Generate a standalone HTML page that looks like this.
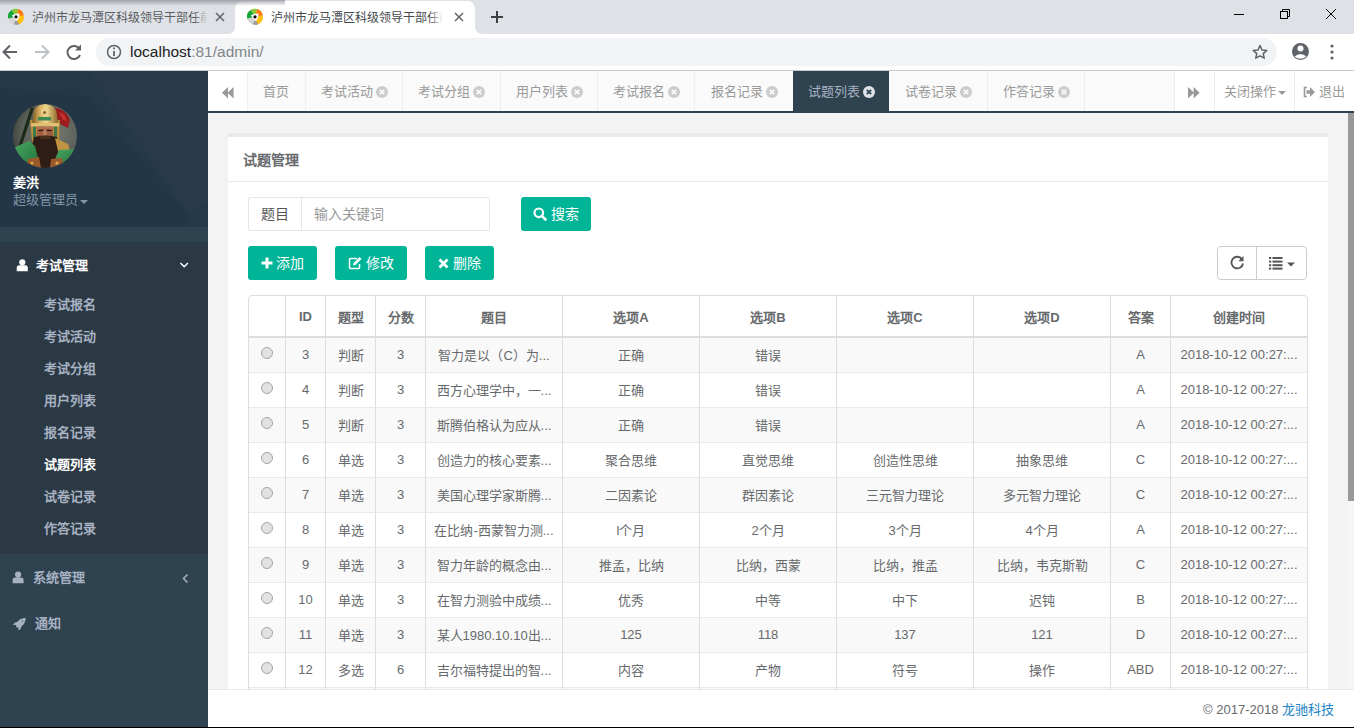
<!DOCTYPE html>
<html lang="zh-CN">
<head>
<meta charset="utf-8">
<style>
*{box-sizing:border-box;margin:0;padding:0}
html,body{width:1366px;height:728px;overflow:hidden;background:#fff;font-family:"Liberation Sans",sans-serif}
.abs{position:absolute}
#win{position:absolute;left:0;top:0;width:1354px;height:728px;overflow:hidden;background:#fff}
/* chrome */
#tabstrip{position:absolute;left:0;top:0;width:1354px;height:34px;background:#dee1e6}
.ctab{position:absolute;top:0;height:34px;font-size:12px;color:#45484c;white-space:nowrap}
.ctab .tt{position:absolute;left:32px;top:11px;width:176px;overflow:hidden;line-height:14px}
.ctab .tt:after{content:"";position:absolute;right:0;top:0;width:14px;height:14px}
#tab1 .tt:after{background:linear-gradient(to right,rgba(222,225,230,0),#dee1e6)}
#tab2{left:235px;width:240px;background:#fff;border-radius:8px 8px 0 0;top:1px;height:33px}
#tab2 .tt{top:10px;left:36px;width:172px}
#tab2 .tt:after{background:linear-gradient(to right,rgba(255,255,255,0),#fff)}
#toolbar{position:absolute;left:0;top:34px;width:1354px;height:36px;background:#fff}
#sep{position:absolute;left:0;top:70px;width:1354px;height:1px;background:#c8cacd}
#omni{position:absolute;left:96px;top:38px;width:1181px;height:28px;border-radius:14px;background:#f1f3f4}
#url{position:absolute;left:130px;top:43px;font-size:15.5px;line-height:18px;color:#202124;letter-spacing:0}
#url span{color:#80868b}
/* page */
#side{position:absolute;left:0;top:71px;width:208px;height:657px;background:#2e4250}
#navh{position:absolute;left:0;top:0;width:208px;height:156px;background:#243847;overflow:hidden}
.menu2{position:absolute;left:44px;font-size:13px;line-height:18px;color:#a7b1c2;font-weight:bold;white-space:nowrap}
#main{position:absolute;left:208px;top:71px;width:1146px;height:657px;background:#f3f3f4}
#tabsbar{position:absolute;left:0;top:0;width:1146px;height:42px;background:#fafafa;border-bottom:2px solid #2f4050}
.ptab{position:absolute;top:0;height:40px;line-height:42px;font-size:13px;color:#999;border-right:1px solid #eee;padding:0 15px;white-space:nowrap}
.cxs{display:inline-block;vertical-align:middle;margin-left:3px;position:relative;top:-1px}
.cx{display:inline-block;width:12px;height:12px;border-radius:50%;background:#ccc;vertical-align:middle;margin-left:3px;position:relative;top:-1px}
#footer{position:absolute;left:0;top:618px;width:1146px;height:38px;background:#fff;border-top:1px solid #e7eaec}
#bline{position:absolute;left:0;top:727px;width:1354px;height:1px;background:#000}
#frame{position:absolute;left:0;top:42px;width:1146px;height:576px;overflow:hidden;background:#f3f3f4}
#sb{position:absolute;left:1140px;top:0;width:6px;height:576px;background:#f6f6f6}
#sbt{position:absolute;left:0;top:0;width:6px;height:388px;background:#999}
.ibox{position:absolute;left:20px;top:20px;width:1100px;height:700px;background:#fff}
.ititle{position:absolute;left:0;top:0;width:1100px;height:49px;border-top:4px solid #e7eaec;border-bottom:1px solid #e7eaec}
.btn{position:absolute;height:34px;background:#00b498;border-radius:3px;color:#fff;font-size:14px;line-height:34px;white-space:nowrap}
table{position:absolute;border-collapse:separate;border-spacing:0;font-size:13px;color:#676a6c}
th{height:42px;font-weight:bold;text-align:center;border-bottom:2px solid #ddd;padding:0;white-space:nowrap;overflow:hidden}
td{height:35px;text-align:center;border-bottom:1px solid #e7eaec;padding:0 0 2px 0;white-space:nowrap;overflow:hidden}
.radio{position:absolute;left:12px;top:9px;width:12px;height:12px;border-radius:50%;background:#e2e2e2;border:1px solid #a5a5a5}
</style>
</head>
<body>
<div id="win">
  <div id="tabstrip">
    <div class="ctab" id="tab1" style="left:0;width:235px;color:#595c61">
      <div class="tt">泸州市龙马潭区科级领导干部任前公示</div>
    </div>
    <div class="ctab" id="tab2">
      <div class="tt">泸州市龙马潭区科级领导干部任前公示</div>
    </div>
  </div>
  <div id="toolbar"></div>
  <div id="omni"></div>
  <div id="url">localhost<span>:81/admin/</span></div>
  <div id="sep"></div>

  <svg class="abs" style="left:0;top:0" width="1354" height="71" viewBox="0 0 1354 71">
    <defs>
      <linearGradient id="shd" x1="0" y1="0" x2="0" y2="1">
        <stop offset="0" stop-color="#8f939a" stop-opacity="0.8"/>
        <stop offset="1" stop-color="#8f939a" stop-opacity="0"/>
      </linearGradient>
      <g id="fav"><circle cx="0" cy="0" r="8" fill="#d4d4d4"/><path d="M0 0 L1.11 7.92 A8 8 0 0 0 7.83 -1.66 Z" fill="#ffc20e"/><path d="M0 0 L7.83 -1.66 A8 8 0 0 0 1.94 -7.76 Z" fill="#ff7a0a"/><path d="M0 0 L1.94 -7.76 A8 8 0 0 0 -4.36 -6.71 Z" fill="#8cc932"/><path d="M0 0 L-4.36 -6.71 A8 8 0 0 0 -7.83 1.66 Z" fill="#13a538"/><path d="M-2 7.75 A8 8 0 0 0 3.2 7.33 L1.2 4 L-1 4.5 Z" fill="#9b9b9b"/><path d="M-4.3 -1.2 Q-0.5 -3.8 3.4 -3.2 Q3.8 1.2 0.9 4.2 Q-1.8 1.4 -4.3 -1.2 Z" fill="#fff"/><circle cx="0" cy="0" r="1.6" fill="#000"/></g>
    </defs>
    <path d="M227 34 Q235 34 235 26 L235 34 Z M475 26 Q475 34 483 34 L475 34 Z" fill="#fff"/>
    <rect x="0" y="0" width="285" height="6" fill="url(#shd)"/>
    <use href="#fav" x="16" y="16.8"/>
    <use href="#fav" x="255" y="16.8"/>
    <g stroke="#5f6368" stroke-width="1.5" fill="none">
      <path d="M216 13 L224 21 M224 13 L216 21"/>
      <path d="M455 13 L463 21 M463 13 L455 21"/>
    </g>
    <path d="M491 17 H503 M497 11 V23" stroke="#3c4043" stroke-width="2" fill="none"/>
    <g stroke="#000" stroke-width="1" fill="none">
      <path d="M1234 14.5 H1244"/>
      <rect x="1280.5" y="11.5" width="7" height="7"/>
      <path d="M1282.5 11.5 V9.5 H1289.5 V16.5 H1287.5"/>
      <path d="M1326 9 L1336 19 M1336 9 L1326 19"/>
    </g>
    <g stroke="#5f6368" stroke-width="2" fill="none">
      <path d="M17 52 H4 M10 45.5 L3.5 52 L10 58.5"/>
    </g>
    <g stroke="#bdc1c6" stroke-width="2" fill="none">
      <path d="M35 52 H48 M42 45.5 L48.5 52 L42 58.5"/>
    </g>
    <g stroke="#5f6368" stroke-width="2" fill="none">
      <path d="M79.5 49 A6.5 6.5 0 1 0 80 55"/>
    </g>
    <path d="M81 44.5 V50.5 H75 Z" fill="#5f6368"/>
    <circle cx="114" cy="52" r="6.5" stroke="#5f6368" stroke-width="1.5" fill="none"/>
    <rect x="113.1" y="51" width="1.8" height="5" fill="#5f6368"/>
    <rect x="113.1" y="47.5" width="1.8" height="1.8" fill="#5f6368"/>
    <path d="M1260 45.5 L1262 50 L1266.8 50.4 L1263.2 53.6 L1264.3 58.2 L1260 55.8 L1255.7 58.2 L1256.8 53.6 L1253.2 50.4 L1258 50 Z" stroke="#5f6368" stroke-width="1.5" fill="none" stroke-linejoin="round"/>
    <circle cx="1300.5" cy="51.5" r="8.5" fill="#5f6368"/>
    <circle cx="1300.5" cy="48.5" r="3" fill="#fff"/>
    <path d="M1294.5 56.5 Q1300.5 51.5 1306.5 56.5 Q1300.5 61 1294.5 56.5 Z" fill="#fff"/>
    <g fill="#5f6368">
      <circle cx="1332" cy="46" r="1.6"/><circle cx="1332" cy="52" r="1.6"/><circle cx="1332" cy="58" r="1.6"/>
    </g>
  </svg>

  <div id="side">
    <div id="navh">
      <svg class="abs" style="left:0;top:0" width="208" height="156">
        <path d="M88 0 L208 0 L208 130 L190 145 Z" fill="#293b4b" opacity="0.75"/>
        <path d="M0 18 Q40 20 88 26 L190 145 L180 156 L0 156 Z" fill="#223344" opacity="0.5"/>
      </svg>
      <svg class="abs" style="left:13px;top:33px" width="64" height="64" viewBox="0 0 64 64">
        <defs><clipPath id="cc"><circle cx="32" cy="32" r="32"/></clipPath>
        <filter id="bl" filterUnits="userSpaceOnUse" x="-5" y="-5" width="74" height="74"><feGaussianBlur stdDeviation="0.6"/></filter>
        <radialGradient id="bgav" cx="0.6" cy="0.45" r="0.65"><stop offset="0" stop-color="#777a72"/><stop offset="0.7" stop-color="#5a5f57"/><stop offset="1" stop-color="#3c433c"/></radialGradient>
        <linearGradient id="gold" x1="0" y1="0" x2="1" y2="0"><stop offset="0" stop-color="#7a5a22"/><stop offset="0.3" stop-color="#d8b060"/><stop offset="0.55" stop-color="#f0d890"/><stop offset="1" stop-color="#8a6428"/></linearGradient>
        <linearGradient id="skin" x1="0" y1="0" x2="0" y2="1"><stop offset="0" stop-color="#b67452"/><stop offset="1" stop-color="#8c4e34"/></linearGradient>
        <linearGradient id="grn" x1="0" y1="0" x2="1" y2="1"><stop offset="0" stop-color="#4caa62"/><stop offset="1" stop-color="#1e6e3a"/></linearGradient>
        </defs>
        <g clip-path="url(#cc)">
          <rect width="64" height="64" fill="url(#bgav)"/>
          <g filter="url(#bl)">
          <path d="M18 3 L21 4 L8 44 L5 43 Z" fill="#1e2a1c"/>
          <path d="M41 4 Q52 4 57 16 L55 24 L47 20 L43 12 Z" fill="#9a1c1c"/>
          <path d="M46 8 Q52 10 54 17 L50 16 Z" fill="#c83030"/>
          <path d="M17 16 L24 16 L25 36 L19 38 Z" fill="#b88a3a"/>
          <path d="M40 16 L47 16 L46 38 L40 36 Z" fill="#b88a3a"/>
          <path d="M20 20 L23 20 L23 34 L20 35 Z" fill="#3e7a46"/>
          <path d="M41 20 L44 20 L44 35 L41 34 Z" fill="#3e7a46"/>
          <path d="M20 10 Q21 1 32 0 Q43 1 44 10 L45 21 L19 21 Z" fill="url(#gold)"/>
          <circle cx="31.5" cy="8" r="3.6" fill="#e6d08a"/>
          <circle cx="31.5" cy="8.5" r="1.6" fill="#8a6a30"/>
          <path d="M25 13 L38 13 L38 16.5 L25 16.5 Z" fill="#3e8a52"/>
          <path d="M18 19 L46 19 L46 22.5 L18 22.5 Z" fill="#e0c070"/>
          <path d="M23.5 22.5 L40.5 22.5 L40 36 L24 36 Z" fill="url(#skin)"/>
          <path d="M25 26 L30 25.5 L30 27 L25.5 27.2 Z M34 25.5 L39 26 L38.5 27.2 L34 27 Z" fill="#2a160c"/>
          <path d="M30.5 27 L33 27 L33.5 32 L30 32 Z" fill="#c08060"/>
          <path d="M21 33 Q32 30 44 33 L46 46 L39 64 L26 64 L18 46 Z" fill="#2e1d13"/>
          <path d="M26 32.5 Q32 31 38 32.5 L37 35 L27 35 Z" fill="#4a2e1e"/>
          <path d="M0 44 L16 37 L22 42 L26 58 L20 64 L0 64 Z" fill="url(#grn)"/>
          <path d="M42 34 L55 40 L58 50 L45 47 Z" fill="#c09440"/>
          <path d="M64 45 L46 46 L41 58 L46 64 L64 64 Z" fill="url(#grn)"/>
          <path d="M15 55 L26 53 L28 64 L13 64 Z" fill="#9a5a2c"/>
          <path d="M38 55 L49 54 L51 64 L37 64 Z" fill="#9a5a2c"/>
          <circle cx="19" cy="59" r="1.6" fill="#d8a850"/>
          <circle cx="44" cy="59" r="1.6" fill="#d8a850"/>
          </g>
        </g>
      </svg>
      <div class="abs" style="left:13px;top:103px;font-size:13px;line-height:18px;color:#fff;font-weight:bold">姜洪</div>
      <div class="abs" style="left:13px;top:120px;font-size:13px;line-height:18px;color:#8095a8">超级管理员<span style="display:inline-block;width:0;height:0;border-left:4px solid transparent;border-right:4px solid transparent;border-top:4px solid #8095a8;margin-left:2px;vertical-align:middle;position:relative;top:1px"></span></div>
    </div>
    <div class="abs" style="left:0;top:171px;width:208px;height:312px;background:#2a3944"></div>
    <svg class="abs" style="left:0;top:171px" width="208" height="420">
      <g fill="#fff">
        <circle cx="22.3" cy="20.3" r="3.1"/>
        <path d="M16.7 29.2 V25.8 Q16.7 23.2 19.2 23.2 H25.3 Q27.8 23.2 27.8 25.8 V29.2 Z"/>
      </g>
      <path d="M180.5 21 L184.2 24.7 L187.9 21" stroke="#fff" stroke-width="1.6" fill="none"/>
    </svg>
    <div class="abs" style="left:36px;top:186px;font-size:13px;line-height:18px;color:#fff;font-weight:bold">考试管理</div>
    <div class="menu2" style="top:225px">考试报名</div>
    <div class="menu2" style="top:257px">考试活动</div>
    <div class="menu2" style="top:289px">考试分组</div>
    <div class="menu2" style="top:321px">用户列表</div>
    <div class="menu2" style="top:353px">报名记录</div>
    <div class="menu2" style="top:385px;color:#fff">试题列表</div>
    <div class="menu2" style="top:417px">试卷记录</div>
    <div class="menu2" style="top:449px">作答记录</div>
    <svg class="abs" style="left:0;top:483px" width="208" height="174">
      <g fill="#a7b1c2">
        <circle cx="18.1" cy="20.6" r="3.1"/>
        <path d="M12.6 29.2 V25.8 Q12.6 23.4 15 23.4 H21.2 Q23.6 23.4 23.6 25.8 V29.2 Z"/>
        <g transform="translate(13 63.5)"><path d="M12.8 0.2 Q7 0.6 4.2 4.4 L1.6 5.2 L0 7.6 L3.2 7.6 L3 9.2 L3.8 10 L5.4 9.8 L5.4 13 L7.6 11.4 L8.6 8.8 Q12.4 6 12.8 0.2 Z"/><circle cx="9.4" cy="3.6" r="0.6" fill="#2e4250"/></g>
      </g>
      <path d="M187.5 20.5 L183.5 24.5 L187.5 28.5" stroke="#a7b1c2" stroke-width="1.5" fill="none"/>
    </svg>
    <div class="abs" style="left:33px;top:498px;font-size:13px;line-height:18px;color:#a7b1c2;font-weight:bold">系统管理</div>
    <div class="abs" style="left:35px;top:544px;font-size:13px;line-height:18px;color:#a7b1c2;font-weight:bold">通知</div>
  </div>

  <div id="main">
    <div id="tabsbar">
<div class="abs" style="left:0;top:0;width:40px;height:40px;background:#fff;border-right:1px solid #eee"></div>
<svg class="abs" style="left:14px;top:16px" width="12" height="12" viewBox="0 0 12 12"><path d="M6 0 L0 5.7 L6 11.4 Z M11.6 0 L5.6 5.7 L11.6 11.4 Z" fill="#999"/></svg>
<div class="ptab" style="left:40.2px;width:57.4px">首页</div>
<div class="ptab" style="left:97.6px;width:97.6px">考试活动<svg class="cxs" width="12" height="12" viewBox="0 0 12 12"><circle cx="6" cy="6" r="6" fill="#ccc"/><path d="M3.8 3.8 L8.2 8.2 M8.2 3.8 L3.8 8.2" stroke="#fafafa" stroke-width="1.8"/></svg></div>
<div class="ptab" style="left:195.2px;width:97.5px">考试分组<svg class="cxs" width="12" height="12" viewBox="0 0 12 12"><circle cx="6" cy="6" r="6" fill="#ccc"/><path d="M3.8 3.8 L8.2 8.2 M8.2 3.8 L3.8 8.2" stroke="#fafafa" stroke-width="1.8"/></svg></div>
<div class="ptab" style="left:292.7px;width:97.4px">用户列表<svg class="cxs" width="12" height="12" viewBox="0 0 12 12"><circle cx="6" cy="6" r="6" fill="#ccc"/><path d="M3.8 3.8 L8.2 8.2 M8.2 3.8 L3.8 8.2" stroke="#fafafa" stroke-width="1.8"/></svg></div>
<div class="ptab" style="left:390.1px;width:97.4px">考试报名<svg class="cxs" width="12" height="12" viewBox="0 0 12 12"><circle cx="6" cy="6" r="6" fill="#ccc"/><path d="M3.8 3.8 L8.2 8.2 M8.2 3.8 L3.8 8.2" stroke="#fafafa" stroke-width="1.8"/></svg></div>
<div class="ptab" style="left:487.5px;width:98.6px">报名记录<svg class="cxs" width="12" height="12" viewBox="0 0 12 12"><circle cx="6" cy="6" r="6" fill="#ccc"/><path d="M3.8 3.8 L8.2 8.2 M8.2 3.8 L3.8 8.2" stroke="#fafafa" stroke-width="1.8"/></svg></div>
<div class="ptab" style="left:585.1px;width:95.8px;background:#2e4250;color:#a7b1c2;border-right:0">试题列表<svg class="cxs" width="12" height="12" viewBox="0 0 12 12"><circle cx="6" cy="6" r="6" fill="#dfe3e8"/><path d="M3.8 3.8 L8.2 8.2 M8.2 3.8 L3.8 8.2" stroke="#2e4250" stroke-width="1.8"/></svg></div>
<div class="ptab" style="left:681.9px;width:98.5px">试卷记录<svg class="cxs" width="12" height="12" viewBox="0 0 12 12"><circle cx="6" cy="6" r="6" fill="#ccc"/><path d="M3.8 3.8 L8.2 8.2 M8.2 3.8 L3.8 8.2" stroke="#fafafa" stroke-width="1.8"/></svg></div>
<div class="ptab" style="left:780.4px;width:97.1px">作答记录<svg class="cxs" width="12" height="12" viewBox="0 0 12 12"><circle cx="6" cy="6" r="6" fill="#ccc"/><path d="M3.8 3.8 L8.2 8.2 M8.2 3.8 L3.8 8.2" stroke="#fafafa" stroke-width="1.8"/></svg></div>
<div class="abs" style="left:966px;top:0;width:180px;height:40px;background:#fff"></div>
<div class="abs" style="left:966px;top:0;width:1px;height:40px;background:#eee"></div>
<div class="abs" style="left:1006px;top:0;width:1px;height:40px;background:#eee"></div>
<div class="abs" style="left:1086px;top:0;width:1px;height:40px;background:#eee"></div>
<svg class="abs" style="left:980px;top:16px" width="12" height="12" viewBox="0 0 12 12"><path d="M0 0 L6 5.7 L0 11.4 Z M5.6 0 L11.6 5.7 L5.6 11.4 Z" fill="#999"/></svg>
<div class="abs" style="left:1016px;top:1px;line-height:40px;font-size:13px;color:#999;white-space:nowrap">关闭操作<span style="display:inline-block;width:0;height:0;border-left:4px solid transparent;border-right:4px solid transparent;border-top:4px solid #999;margin-left:2px;vertical-align:middle"></span></div>
<svg class="abs" style="left:1095px;top:15px" width="13" height="12" viewBox="0 0 13 12"><path d="M4 1.5 H1.5 V10.5 H4" stroke="#999" stroke-width="1.6" fill="none"/><path d="M3.5 4.2 H7 V1 L12 6 L7 11 V7.8 H3.5 Z" fill="#999"/></svg>
<div class="abs" style="left:1111px;top:1px;line-height:40px;font-size:13px;color:#999;white-space:nowrap">退出</div>
</div>
    <div id="frame">
<div class="ibox">
<div class="ititle"><div class="abs" style="left:15px;top:13px;font-size:14px;line-height:20px;font-weight:bold;color:#676a6c">试题管理</div></div>
<div class="abs" style="left:20px;top:64px;width:242px;height:34px;border:1px solid #e5e6e7;border-radius:2px"></div>
<div class="abs" style="left:73px;top:64px;width:1px;height:34px;background:#e5e6e7"></div>
<div class="abs" style="left:33px;top:64px;line-height:34px;font-size:14px;color:#555">题目</div>
<div class="abs" style="left:86px;top:64px;line-height:34px;font-size:14px;color:#999">输入关键词</div>
<div class="btn" style="left:293px;top:64px;width:70px"><svg class="abs" style="left:12px;top:10px" width="14" height="14" viewBox="0 0 14 14"><circle cx="5.8" cy="5.8" r="4.3" stroke="#fff" stroke-width="2.2" fill="none"/><path d="M8.8 8.8 L12.5 12.5" stroke="#fff" stroke-width="2.6" stroke-linecap="round"/></svg><span class="abs" style="left:30px;top:0">搜索</span></div>
<div class="btn" style="left:20px;top:113px;width:69px"><svg class="abs" style="left:13px;top:11px" width="12" height="12" viewBox="0 0 12 12"><path d="M6 0.5 V11.5 M0.5 6 H11.5" stroke="#fff" stroke-width="3"/></svg><span class="abs" style="left:28px;top:0">添加</span></div>
<div class="btn" style="left:107px;top:113px;width:72px"><svg class="abs" style="left:13px;top:10px" width="15" height="14" viewBox="0 0 15 14"><path d="M9 2.5 H2.5 Q1.5 2.5 1.5 3.5 V11.5 Q1.5 12.5 2.5 12.5 H10.5 Q11.5 12.5 11.5 11.5 V8" stroke="#fff" stroke-width="1.5" fill="none"/><path d="M5 9.5 L5.5 7 L11.5 1 L13.5 3 L7.5 9 Z" fill="#fff"/></svg><span class="abs" style="left:31px;top:0">修改</span></div>
<div class="btn" style="left:197px;top:113px;width:69px"><svg class="abs" style="left:13px;top:12px" width="11" height="11" viewBox="0 0 11 11"><path d="M1.5 1.5 L9.5 9.5 M9.5 1.5 L1.5 9.5" stroke="#fff" stroke-width="2.8"/></svg><span class="abs" style="left:28px;top:0">删除</span></div>
<div class="abs" style="left:989px;top:113px;width:90px;height:34px;border:1px solid #ccc;border-radius:4px;background:#fff"></div>
<div class="abs" style="left:1028px;top:113px;width:1px;height:34px;background:#ccc"></div>
<svg class="abs" style="left:1002px;top:122px" width="15" height="15" viewBox="0 0 15 15"><path d="M12 4.2 A5.8 5.8 0 1 0 13 8.5" stroke="#555" stroke-width="1.8" fill="none"/><path d="M13.5 1 V6.2 H8.3 Z" fill="#555"/></svg>
<svg class="abs" style="left:1041px;top:123px" width="28" height="14" viewBox="0 0 28 14"><g fill="#555"><rect x="0" y="1" width="2.2" height="2"/><rect x="3.5" y="1" width="10" height="2"/><rect x="0" y="4.6" width="2.2" height="2"/><rect x="3.5" y="4.6" width="10" height="2"/><rect x="0" y="8.2" width="2.2" height="2"/><rect x="3.5" y="8.2" width="10" height="2"/><rect x="0" y="11.6" width="2.2" height="2"/><rect x="3.5" y="11.6" width="10" height="2"/><path d="M18 6.5 L26 6.5 L22 10.5 Z"/></g></svg>
<table style="left:20px;top:162px;width:1059px;border:1px solid #ddd;border-radius:4px 4px 0 0;table-layout:fixed"><colgroup><col style="width:36px"><col style="width:40px"><col style="width:50px"><col style="width:50px"><col style="width:137px"><col style="width:137px"><col style="width:137px"><col style="width:137px"><col style="width:137px"><col style="width:60px"><col style="width:137px"></colgroup><thead><tr><th style=""></th><th style="border-left:1px solid #ddd;">ID</th><th style="border-left:1px solid #ddd;">题型</th><th style="border-left:1px solid #ddd;">分数</th><th style="border-left:1px solid #ddd;">题目</th><th style="border-left:1px solid #ddd;">选项A</th><th style="border-left:1px solid #ddd;">选项B</th><th style="border-left:1px solid #ddd;">选项C</th><th style="border-left:1px solid #ddd;">选项D</th><th style="border-left:1px solid #ddd;">答案</th><th style="border-left:1px solid #ddd;">创建时间</th></tr></thead><tbody><tr style="background:#f9f9f9"><td style="position:relative"><span class="radio"></span></td><td style="border-left:1px solid #ddd">3</td><td style="border-left:1px solid #ddd">判断</td><td style="border-left:1px solid #ddd">3</td><td style="border-left:1px solid #ddd">智力是以（C）为...</td><td style="border-left:1px solid #ddd">正确</td><td style="border-left:1px solid #ddd">错误</td><td style="border-left:1px solid #ddd"></td><td style="border-left:1px solid #ddd"></td><td style="border-left:1px solid #ddd">A</td><td style="border-left:1px solid #ddd">2018-10-12 00:27:...</td></tr><tr style="background:#fff"><td style="position:relative"><span class="radio"></span></td><td style="border-left:1px solid #ddd">4</td><td style="border-left:1px solid #ddd">判断</td><td style="border-left:1px solid #ddd">3</td><td style="border-left:1px solid #ddd">西方心理学中，一...</td><td style="border-left:1px solid #ddd">正确</td><td style="border-left:1px solid #ddd">错误</td><td style="border-left:1px solid #ddd"></td><td style="border-left:1px solid #ddd"></td><td style="border-left:1px solid #ddd">A</td><td style="border-left:1px solid #ddd">2018-10-12 00:27:...</td></tr><tr style="background:#f9f9f9"><td style="position:relative"><span class="radio"></span></td><td style="border-left:1px solid #ddd">5</td><td style="border-left:1px solid #ddd">判断</td><td style="border-left:1px solid #ddd">3</td><td style="border-left:1px solid #ddd">斯腾伯格认为应从...</td><td style="border-left:1px solid #ddd">正确</td><td style="border-left:1px solid #ddd">错误</td><td style="border-left:1px solid #ddd"></td><td style="border-left:1px solid #ddd"></td><td style="border-left:1px solid #ddd">A</td><td style="border-left:1px solid #ddd">2018-10-12 00:27:...</td></tr><tr style="background:#fff"><td style="position:relative"><span class="radio"></span></td><td style="border-left:1px solid #ddd">6</td><td style="border-left:1px solid #ddd">单选</td><td style="border-left:1px solid #ddd">3</td><td style="border-left:1px solid #ddd">创造力的核心要素...</td><td style="border-left:1px solid #ddd">聚合思维</td><td style="border-left:1px solid #ddd">直觉思维</td><td style="border-left:1px solid #ddd">创造性思维</td><td style="border-left:1px solid #ddd">抽象思维</td><td style="border-left:1px solid #ddd">C</td><td style="border-left:1px solid #ddd">2018-10-12 00:27:...</td></tr><tr style="background:#f9f9f9"><td style="position:relative"><span class="radio"></span></td><td style="border-left:1px solid #ddd">7</td><td style="border-left:1px solid #ddd">单选</td><td style="border-left:1px solid #ddd">3</td><td style="border-left:1px solid #ddd">美国心理学家斯腾...</td><td style="border-left:1px solid #ddd">二因素论</td><td style="border-left:1px solid #ddd">群因素论</td><td style="border-left:1px solid #ddd">三元智力理论</td><td style="border-left:1px solid #ddd">多元智力理论</td><td style="border-left:1px solid #ddd">C</td><td style="border-left:1px solid #ddd">2018-10-12 00:27:...</td></tr><tr style="background:#fff"><td style="position:relative"><span class="radio"></span></td><td style="border-left:1px solid #ddd">8</td><td style="border-left:1px solid #ddd">单选</td><td style="border-left:1px solid #ddd">3</td><td style="border-left:1px solid #ddd">在比纳-西蒙智力测...</td><td style="border-left:1px solid #ddd">l个月</td><td style="border-left:1px solid #ddd">2个月</td><td style="border-left:1px solid #ddd">3个月</td><td style="border-left:1px solid #ddd">4个月</td><td style="border-left:1px solid #ddd">A</td><td style="border-left:1px solid #ddd">2018-10-12 00:27:...</td></tr><tr style="background:#f9f9f9"><td style="position:relative"><span class="radio"></span></td><td style="border-left:1px solid #ddd">9</td><td style="border-left:1px solid #ddd">单选</td><td style="border-left:1px solid #ddd">3</td><td style="border-left:1px solid #ddd">智力年龄的概念由...</td><td style="border-left:1px solid #ddd">推孟，比纳</td><td style="border-left:1px solid #ddd">比纳，西蒙</td><td style="border-left:1px solid #ddd">比纳，推孟</td><td style="border-left:1px solid #ddd">比纳，韦克斯勒</td><td style="border-left:1px solid #ddd">C</td><td style="border-left:1px solid #ddd">2018-10-12 00:27:...</td></tr><tr style="background:#fff"><td style="position:relative"><span class="radio"></span></td><td style="border-left:1px solid #ddd">10</td><td style="border-left:1px solid #ddd">单选</td><td style="border-left:1px solid #ddd">3</td><td style="border-left:1px solid #ddd">在智力测验中成绩...</td><td style="border-left:1px solid #ddd">优秀</td><td style="border-left:1px solid #ddd">中等</td><td style="border-left:1px solid #ddd">中下</td><td style="border-left:1px solid #ddd">迟钝</td><td style="border-left:1px solid #ddd">B</td><td style="border-left:1px solid #ddd">2018-10-12 00:27:...</td></tr><tr style="background:#f9f9f9"><td style="position:relative"><span class="radio"></span></td><td style="border-left:1px solid #ddd">11</td><td style="border-left:1px solid #ddd">单选</td><td style="border-left:1px solid #ddd">3</td><td style="border-left:1px solid #ddd">某人1980.10.10出...</td><td style="border-left:1px solid #ddd">125</td><td style="border-left:1px solid #ddd">118</td><td style="border-left:1px solid #ddd">137</td><td style="border-left:1px solid #ddd">121</td><td style="border-left:1px solid #ddd">D</td><td style="border-left:1px solid #ddd">2018-10-12 00:27:...</td></tr><tr style="background:#fff"><td style="position:relative"><span class="radio"></span></td><td style="border-left:1px solid #ddd">12</td><td style="border-left:1px solid #ddd">多选</td><td style="border-left:1px solid #ddd">6</td><td style="border-left:1px solid #ddd">吉尔福特提出的智...</td><td style="border-left:1px solid #ddd">内容</td><td style="border-left:1px solid #ddd">产物</td><td style="border-left:1px solid #ddd">符号</td><td style="border-left:1px solid #ddd">操作</td><td style="border-left:1px solid #ddd">ABD</td><td style="border-left:1px solid #ddd">2018-10-12 00:27:...</td></tr><tr style="background:#f9f9f9"><td style="position:relative"><span class="radio"></span></td><td style="border-left:1px solid #ddd">&nbsp;</td><td style="border-left:1px solid #ddd">&nbsp;</td><td style="border-left:1px solid #ddd">&nbsp;</td><td style="border-left:1px solid #ddd">&nbsp;</td><td style="border-left:1px solid #ddd">&nbsp;</td><td style="border-left:1px solid #ddd">&nbsp;</td><td style="border-left:1px solid #ddd">&nbsp;</td><td style="border-left:1px solid #ddd">&nbsp;</td><td style="border-left:1px solid #ddd">&nbsp;</td><td style="border-left:1px solid #ddd">&nbsp;</td></tr></tbody></table>
</div>
      <div id="sb"><div id="sbt"></div></div>
    </div>
    <div id="footer"><div class="abs" style="right:20px;top:11px;font-size:13px;line-height:18px;color:#676a6c;white-space:nowrap">© 2017-2018 <span style="color:#1c84c6">龙驰科技</span></div></div>
  </div>
  <div id="bline"></div>
</div>
</body>
</html>
